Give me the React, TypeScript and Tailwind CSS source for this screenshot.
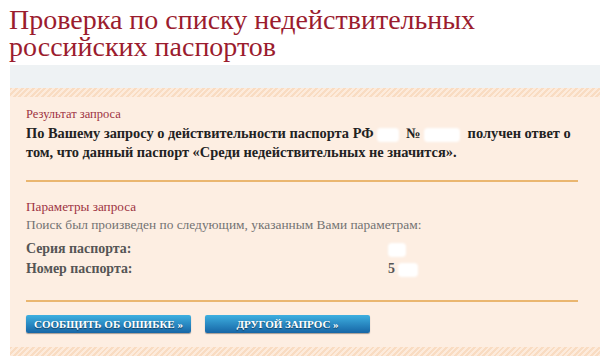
import React from 'react';

const serif = { fontFamily: '"Liberation Serif", "DejaVu Serif", serif' };

function Redacted({ w }: { w: string }) {
  return <span className={`inline-block h-[14px] align-middle rounded-sm bg-white blur-[1px] ${w}`} />;
}

function Stripes() {
  return (
    <div className="h-[9px] bg-[repeating-linear-gradient(135deg,#f9dcc2_0px,#f9dcc2_2px,#fdebdc_2px,#fdebdc_4px)]" />
  );
}

function Button({ children, w }: { children: React.ReactNode; w: string }) {
  return (
    <button
      className={`h-[18px] ${w} rounded-[2px] bg-gradient-to-b from-[#3fb0e0] to-[#1766a6] shadow-[0_1px_1px_rgba(0,0,0,0.35)] text-[11px] leading-[18px] font-bold uppercase text-white [text-shadow:0_1px_1px_rgba(0,0,0,0.5)]`}
      style={serif}
    >
      {children}
    </button>
  );
}

export default function App() {
  return (
    <div className="w-[600px] h-[363px] overflow-hidden bg-white" style={serif}>
      <h1 className="pl-[9px] pt-[6px] text-[28px] leading-[27px] text-[#9b1c2e]">
        Проверка по списку недействительных
        <br />
        российских паспортов
      </h1>

      <div className="ml-[10px] mt-[5px]">
        <div className="h-[23px] bg-[#eef2f4]" />
        <Stripes />
        <div className="bg-[#fdeee2] px-[16px] pt-[9px] pb-[14px]">
          <section>
            <h2 className="text-[12.5px] leading-[16px] text-[#9e3343]">Результат запроса</h2>
            <p className="mt-[2px] text-[14.4px] leading-[19px] font-bold text-[#222]">
              По Вашему запросу о действительности паспорта РФ <Redacted w="w-[22px]" /> &nbsp;№{' '}
              <Redacted w="w-[36px]" /> &nbsp;получен ответ о том, что данный паспорт «Среди недействительных не
              значится».
            </p>
          </section>

          <div className="mt-[18px] mr-[6px] h-[2px] bg-[#eab670]" />

          <section className="mt-[17px]">
            <h2 className="text-[13.2px] leading-[16px] text-[#9e3343]">Параметры запроса</h2>
            <p className="mt-[2px] text-[13.4px] leading-[16px] text-[#737373]">
              Поиск был произведен по следующим, указанным Вами параметрам:
            </p>
            <div className="mt-[6px] text-[13.9px] leading-[20px] font-bold text-[#555]">
              <div className="grid grid-cols-[362px_1fr]">
                <span>Серия паспорта:</span>
                <span>
                  <Redacted w="w-[18px]" />
                </span>
              </div>
              <div className="grid grid-cols-[362px_1fr]">
                <span>Номер паспорта:</span>
                <span>
                  5 <Redacted w="w-[20px]" />
                </span>
              </div>
            </div>
          </section>

          <div className="mt-[21px] mr-[6px] h-[2px] bg-[#eab670]" />

          <div className="mt-[13px] flex gap-[14px]">
            <Button w="w-[165px]">Сообщить об ошибке »</Button>
            <Button w="w-[165px]">Другой запрос »</Button>
          </div>
        </div>
        <Stripes />
      </div>
    </div>
  );
}
